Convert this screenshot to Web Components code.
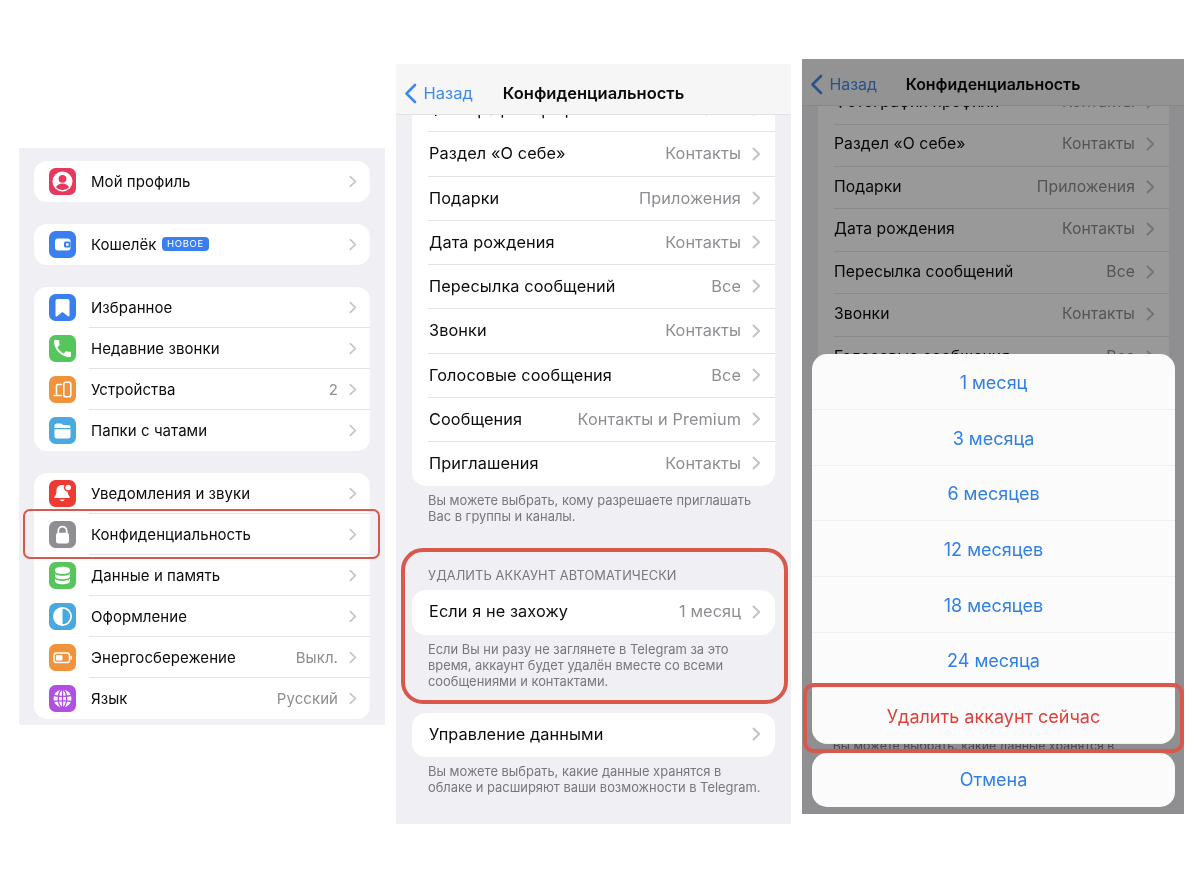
<!DOCTYPE html>
<html lang="ru">
<head>
<meta charset="utf-8">
<title>Telegram — конфиденциальность</title>
<style>
  html,body{margin:0;background:#fff}
  body{font-family:Inter,"Noto Sans",sans-serif;color:#0b0b0d;height:873px;overflow:hidden}
</style>
</head>
<body>
<collage-page>
  <tg-panel style="--top:148px;--w:366px;--h:577px">
    <settings-list></settings-list>
    <red-frame style="left:4px;top:361px;width:357px;height:50px;--b:2.500px;--r:7px"></red-frame>
  </tg-panel>

  <tg-panel style="--top:64px;--w:395px;--h:760px;--s:1;--font:16.300px;--track:.1px">
    <privacy-list style="--lift:.5px"></privacy-list>
    <tg-nav style="--nav-h:51px;--nav-font:16.500px;--nav-pad:8px;--nav-ink:#3f8ae6;--nav-bg:#f6f6f6"></tg-nav>
    <red-frame style="left:5px;top:484px;width:387px;height:156px;--b:4px;--r:22px"></red-frame>
  </tg-panel>

  <tg-panel style="--top:59px;--w:382px;--h:755px;--s:.96;--font:15.700px;--track:.08px;--card-right:15px">
    <privacy-list covered style="--lift:2px;--label-pad:0px;--pad-r:14.500px"></privacy-list>
    <tg-nav style="--nav-h:47px;--nav-font:15.900px;--nav-pad:5px;--nav-ink:#3f8ae6;--nav-bg:#f6f6f6"></tg-nav>
    <tg-scrim></tg-scrim>
    <action-sheet>
      <sheet-btn>1 месяц</sheet-btn>
      <sheet-btn>3 месяца</sheet-btn>
      <sheet-btn>6 месяцев</sheet-btn>
      <sheet-btn>12 месяцев</sheet-btn>
      <sheet-btn>18 месяцев</sheet-btn>
      <sheet-btn>24 месяца</sheet-btn>
      <sheet-btn danger>Удалить аккаунт сейчас</sheet-btn>
      <sheet-btn slot="cancel" cancel>Отмена</sheet-btn>
    </action-sheet>
    <red-frame style="left:1px;top:624px;width:381px;height:70px;--b:4px;--r:11px"></red-frame>
  </tg-panel>
</collage-page>

<script>
(() => {
  // 27x27 icon glyphs, c = tile colour (used for the cut-outs)
  const ICONS = {
    profile: ['#e8385e', c => `<circle cx="13.5" cy="13.5" r="10" fill="#fff"/><circle cx="13.5" cy="10.8" r="3.9" fill="${c}"/><path d="M6.9 19.3c1.3-2.6 3.8-3.7 6.6-3.7s5.3 1.100 6.600 3.700a9 9 0 0 1-13.200 0z" fill="${c}"/>`],
    wallet: ['#3a7ff0', c => `<rect x="6" y="7.500" width="15.500" height="12" rx="3" fill="#fff"/><rect x="15" y="10.500" width="6.500" height="6" rx="1.500" fill="${c}"/><rect x="17" y="12.300" width="2.600" height="2.500" rx=".5" fill="#fff"/>`],
    bookmark: ['#3a7ff0', () => `<path fill="#fff" d="M8.500 5h10a2 2 0 0 1 2 2v14.500c0 .8-.9 1.200-1.500.7l-5.500-4.200-5.500 4.200c-.6.500-1.500.1-1.500-.7V7a2 2 0 0 1 2-2z"/>`],
    phone: ['#55c65b', () => `<path fill="#fff" transform="translate(2.200 2.200) scale(.94)" d="M6.620 10.790c1.440 2.830 3.760 5.140 6.590 6.590l2.200-2.200c.27-.27.67-.36 1.020-.24 1.120.37 2.330.57 3.570.57.55 0 1 .45 1 1V20c0 .55-.45 1-1 1-9.390 0-17-7.610-17-17 0-.55.45-1 1-1h3.500c.55 0 1 .45 1 1 0 1.250.2 2.450.57 3.570.11.35.03.74-.25 1.020l-2.200 2.200z"/>`],
    devices: ['#f0933a', () => `<g fill="none" stroke="#fff" stroke-width="1.600" stroke-linecap="round"><path d="M12.500 8.500H8.700a1.200 1.200 0 0 0-1.200 1.200V18"/><path d="M5 19.500h7.500"/><rect x="14.800" y="6.300" width="7" height="14.400" rx="2"/></g>`],
    folder: ['#4aa9e0', () => `<path fill="#fff" d="M5.500 9A2.500 2.500 0 0 1 8 6.500h3.500c.8 0 1.300.3 1.800.8l.7.7h5a2.500 2.500 0 0 1 2.500 2.500v.5h-16z"/><path fill="#fff" d="M5.500 12.300h16V19a2.500 2.500 0 0 1-2.500 2.500H8A2.500 2.500 0 0 1 5.500 19z"/>`],
    bell: ['#ee3a33', c => `<path fill="#fff" d="M13 5c-3.300 0-5.500 2.400-5.500 5.500 0 3.500-.8 4.800-2 6.200-.4.500-.1 1.300.6 1.300h14c.7 0 1-.8.6-1.300-1.200-1.400-2.200-2.800-2.200-6.200 0-3.100-2.200-5.500-5.500-5.500z"/><path fill="#fff" d="M10.800 19.500a2.500 2.500 0 0 0 4.800 0z"/><circle cx="19.200" cy="7.500" r="4.300" fill="${c}"/><circle cx="19.200" cy="7.500" r="2.800" fill="#fff"/>`],
    lock: ['#8e8e93', () => `<path fill="none" stroke="#fff" stroke-width="1.800" d="M9.300 13V9.800a4.200 4.200 0 0 1 8.400 0V13"/><rect x="7" y="11.800" width="13" height="10.700" rx="2.500" fill="#fff"/>`],
    data: ['#55c65b', () => `<g fill="#fff"><path d="M6 7.800c0-1.700 3.400-3 7.500-3s7.500 1.300 7.500 3v1.300c0 1.700-3.400 3-7.500 3S6 10.800 6 9.100z"/><path d="M6 11.700c1.400 1.400 4.300 2.100 7.500 2.100s6.100-.7 7.500-2.100v2.500c0 1.700-3.400 3-7.500 3s-7.500-1.300-7.500-3z"/><path d="M6 16.800c1.400 1.400 4.300 2.100 7.500 2.100s6.100-.7 7.500-2.100v2.400c0 1.700-3.400 3-7.500 3s-7.500-1.300-7.500-3z"/></g>`],
    theme: ['#48a8e0', () => `<circle cx="13.500" cy="13.500" r="8.600" fill="none" stroke="#fff" stroke-width="1.700"/><path fill="#fff" d="M13.500 5a8.500 8.500 0 0 0 0 17z"/>`],
    battery: ['#f0933a', () => `<rect x="5" y="9" width="15.500" height="9.500" rx="2.600" fill="none" stroke="#fff" stroke-width="1.500"/><rect x="7" y="11" width="6.500" height="5.500" rx="1.200" fill="#fff"/><rect x="21.300" y="11.800" width="1.500" height="4" rx=".7" fill="#fff"/>`],
    globe: ['#b150e0', c => `<circle cx="13.500" cy="13.500" r="9" fill="#fff"/><g fill="none" stroke="${c}" stroke-width="1.300"><ellipse cx="13.500" cy="13.500" rx="4.200" ry="9"/><path d="M13.500 4.500v18M5 10.500c5 1 12 1 17 0M5 16.500c5-1 12-1 17 0"/></g>`]
  };

  const define = (name, cls) => { if (!customElements.get(name)) customElements.define(name, cls); };

  // Small helper: a class that just puts fixed markup in an open shadow root
  const shell = html => class extends HTMLElement {
    constructor() {
      super();
      this.attachShadow({ mode: 'open' }).innerHTML = html;
    }
  };

  define('collage-page', shell(
    '<style>:host{display:flex;align-items:flex-start;gap:11px;padding-left:19px}</style><slot></slot>'));

  define('tg-panel', shell(
    '<style>:host{display:block;position:relative;overflow:hidden;flex:none;margin-top:var(--top);' +
    'width:var(--w);height:var(--h);background:#efeff4;filter:blur(.35px)}</style><slot></slot>'));

  define('tg-card', shell(
    '<style>:host{display:block;background:#fff;border-radius:var(--card-r,13px);overflow:hidden;' +
    'margin:0 var(--card-right,var(--card-x,16px)) 0 var(--card-x,16px)}</style><slot></slot>'));

  define('tg-icon', class extends HTMLElement {
    constructor() {
      super();
      const [bg, draw] = ICONS[this.getAttribute('name')];
      this.attachShadow({ mode: 'open' }).innerHTML =
        '<style>:host{display:block;width:27px;height:27px}svg{display:block}</style>' +
        `<svg width="27" height="27" viewBox="0 0 27 27"><rect width="27" height="27" rx="6.500" fill="${bg}"/>${draw(bg)}</svg>`;
    }
  });

  define('tg-row', class extends HTMLElement {
    constructor() {
      super();
      const value = this.getAttribute('value') || '';
      this.attachShadow({ mode: 'open' }).innerHTML =
        '<style>' +
        ':host{display:flex;align-items:center;height:var(--row-h,41px);font-size:var(--font,15px);line-height:1;letter-spacing:var(--track,0)}' +
        '.ico{flex:none}.ico ::slotted(tg-icon){margin:0 13px 0 15px}' +
        '.body{flex:1;min-width:0;height:100%;box-sizing:border-box;display:flex;align-items:center;' +
        '  margin-left:var(--inset,0);border-bottom:1px solid #e4e4e7;padding:0 var(--pad-r,14px) var(--lift,1px) 0}' +
        ':host(:last-child) .body{border-bottom:0;padding-bottom:calc(var(--lift,1px) + 1px)}' +
        '.label{flex:1;white-space:nowrap;display:flex;align-items:center;padding-left:var(--label-pad,0)}' +
        '.val{color:#8d8d92;margin-right:var(--val-gap,11px);white-space:nowrap}' +
        'svg{flex:none;display:block;width:var(--chev-w,8px);height:var(--chev-h,13px)}' +
        '</style>' +
        '<span class="ico"><slot name="icon"></slot></span>' +
        '<div class="body"><span class="label"><slot></slot></span>' +
        (value ? `<span class="val">${value}</span>` : '') +
        '<svg viewBox="0 0 9 14">' +
        '<path d="M1.500 1.500 7.200 7 1.500 12.500" fill="none" stroke="#c2c2c6" stroke-width="1.900" stroke-linecap="round" stroke-linejoin="round"/></svg></div>';
    }
  });

  define('tg-badge', shell(
    '<style>:host{display:inline-block;margin-left:6px;background:#3a7ff0;color:#fff;border-radius:4px;' +
    'font-size:9.500px;font-weight:400;letter-spacing:.7px;line-height:14px;padding:0 4.500px}</style><slot></slot>'));

  // left column: main settings screen
  const settingsRow = (icon, label, value, extra) =>
    `<tg-row${value ? ` value="${value}"` : ''}><tg-icon slot="icon" name="${icon}"></tg-icon>${label}${extra || ''}</tg-row>`;

  define('settings-list', shell(
    '<style>:host{display:flex;flex-direction:column;gap:22px;padding-top:13px;--track:.06px;--font:15px;' +
    '--card-x:15px;--inset:0;--label-pad:2px;--pad-r:13px;--row-h:41px;--val-gap:11px;--lift:0px}</style>' +
    '<tg-card>' + settingsRow('profile', 'Мой профиль') + '</tg-card>' +
    '<tg-card>' + settingsRow('wallet', 'Кошелёк', '', '<tg-badge>НОВОЕ</tg-badge>') + '</tg-card>' +
    '<tg-card>' + settingsRow('bookmark', 'Избранное') + settingsRow('phone', 'Недавние звонки') +
      settingsRow('devices', 'Устройства', '2') + settingsRow('folder', 'Папки с чатами') + '</tg-card>' +
    '<tg-card>' + settingsRow('bell', 'Уведомления и звуки') + settingsRow('lock', 'Конфиденциальность') +
      settingsRow('data', 'Данные и память') + settingsRow('theme', 'Оформление') +
      settingsRow('battery', 'Энергосбережение', 'Выкл.') + settingsRow('globe', 'Язык', 'Русский') + '</tg-card>'));

  // middle and right columns: the same screen at two scales, --s sets the spacing
  define('tg-note', shell(
    '<style>:host{display:block;color:#77777c;font-size:calc(var(--s,1)*12.900px);line-height:calc(var(--s,1)*16px);' +
    'padding:calc(var(--s,1)*7px) 0 0 calc(var(--s,1)*32px);white-space:nowrap}</style><slot></slot>'));

  const pRow = (label, value) => `<tg-row${value ? ` value="${value}"` : ''}>${label}</tg-row>`;

  const PRIVACY_STYLE =
    '<style>:host{display:block;padding-top:calc(var(--s,1)*24px);--row-h:calc(var(--s,1)*44.250px);' +
    '--inset:16px;--label-pad:1px;--pad-r:14px;--val-gap:calc(var(--s,1)*11px);--card-r:14px;--chev-w:9px;--chev-h:14px;--lift:1px}' +
    '.head{color:#77777c;font-size:calc(var(--s,1)*12.800px);letter-spacing:.1px;line-height:16px;padding-left:32px;' +
    'margin:calc(var(--s,1)*43px) 0 calc(var(--s,1)*6px)}' +
    '.next{margin-top:calc(var(--s,1)*23px)}.ghost{margin-top:352px}</style>';

  const TOP_ROWS = pRow('Фотография профиля', 'Контакты') + pRow('Раздел «О себе»', 'Контакты') + pRow('Подарки', 'Приложения') +
    pRow('Дата рождения', 'Контакты') + pRow('Пересылка сообщений', 'Все') + pRow('Звонки', 'Контакты') +
    pRow('Голосовые сообщения', 'Все');

  const FULL_LIST =
    '<tg-card>' + TOP_ROWS + pRow('Сообщения', 'Контакты и Premium') + pRow('Приглашения', 'Контакты') + '</tg-card>' +
    '<tg-note>Вы можете выбрать, кому разрешаете приглашать<br>Вас в группы и каналы.</tg-note>' +
    '<div class="head">УДАЛИТЬ АККАУНТ АВТОМАТИЧЕСКИ</div>' +
    '<tg-card>' + pRow('Если я не захожу', '1 месяц') + '</tg-card>' +
    '<tg-note>Если Вы ни разу не заглянете в Telegram за это<br>время, аккаунт будет удалён вместе со всеми<br>сообщениями и контактами.</tg-note>' +
    '<div class="next"><tg-card>' + pRow('Управление данными') + '</tg-card></div>' +
    '<tg-note>Вы можете выбрать, какие данные хранятся в<br>облаке и расширяют ваши возможности в Telegram.</tg-note>';

  // "covered": what the action sheet hides is left out, only the strip between its two groups shows
  const COVERED_LIST =
    '<tg-card>' + TOP_ROWS + '</tg-card>' +
    '<div class="ghost"><tg-note>Вы можете выбрать, какие данные хранятся в</tg-note></div>';

  define('privacy-list', class extends HTMLElement {
    constructor() {
      super();
      this.attachShadow({ mode: 'open' }).innerHTML =
        PRIVACY_STYLE + (this.hasAttribute('covered') ? COVERED_LIST : FULL_LIST);
    }
  });

  define('tg-nav', shell(
    '<style>:host{position:absolute;left:0;right:0;top:0;height:var(--nav-h);background:var(--nav-bg);' +
    'border-bottom:1px solid #e2e2e4;box-sizing:border-box;display:grid;grid-template-columns:1fr auto 1fr;align-items:center;' +
    'font-size:var(--nav-font);line-height:1;padding-top:var(--nav-pad)}' +
    '.back{display:flex;align-items:center;gap:7px;padding-left:7.500px;color:var(--nav-ink)}' +
    'h1{margin:0;font:inherit;font-weight:600;white-space:nowrap}</style>' +
    '<div class="back"><svg width="13" height="21" viewBox="0 0 13 21"><path d="M11 2 2.500 10.500 11 19" fill="none" stroke="currentColor" stroke-width="2.600" stroke-linecap="round" stroke-linejoin="round"/></svg>Назад</div>' +
    '<h1>Конфиденциальность</h1><div></div>'));

  define('tg-scrim', shell(
    '<style>:host{position:absolute;inset:0;background:rgba(0,0,0,.4)}</style>'));

  define('action-sheet', shell(
    '<style>:host{position:absolute;left:10px;right:9px;bottom:7px;display:flex;flex-direction:column;gap:9px}' +
    '.group{background:rgba(253,253,254,.985);border-radius:15px;overflow:hidden}</style>' +
    '<div class="group"><slot></slot></div><div class="group"><slot name="cancel"></slot></div>'));

  define('sheet-btn', shell(
    '<style>:host{display:flex;align-items:center;justify-content:center;height:55.700px;font-size:18px;color:#2f7fe6;' +
    'border-bottom:1px solid #f0f0f2;box-sizing:border-box;padding-top:2px}' +
    ':host(:last-child){border-bottom:0}:host([danger]){color:#e0403a}' +
    ':host([cancel]){height:54px;border-bottom:0;padding:0 0 1px}</style><slot></slot>'));

  define('red-frame', shell(
    '<style>:host{position:absolute;box-sizing:border-box;border:var(--b) solid #d9584c;border-radius:var(--r);pointer-events:none}</style>'));
})();
</script>
</body>
</html>
